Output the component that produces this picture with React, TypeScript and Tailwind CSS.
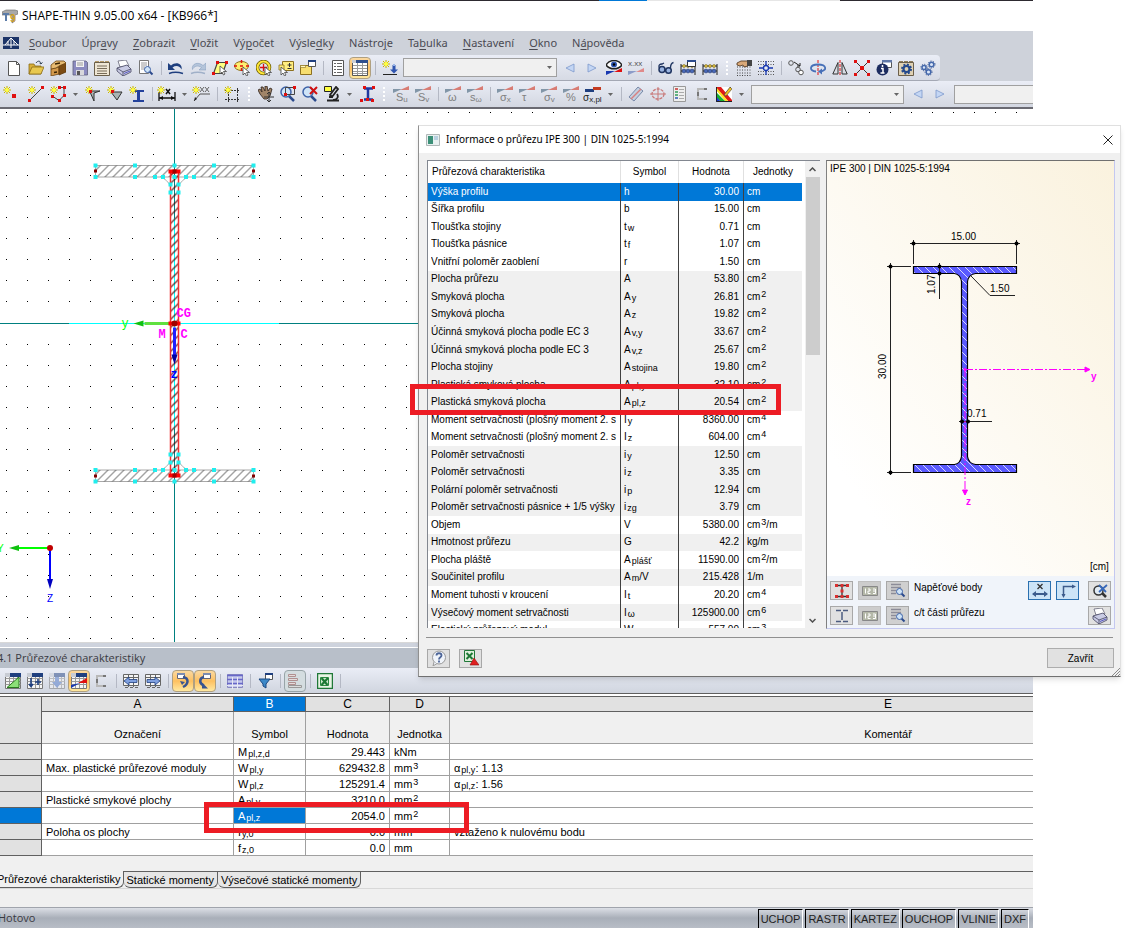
import type { ReactNode } from 'react';

const SANS = "font-['Liberation_Sans',Arial,sans-serif]";
const UI = "font-['Noto_Sans','Open_Sans',sans-serif]";

/* ---------- icons ---------- */

function Svg({ children, wide }: { children: ReactNode; wide?: boolean }) {
  return (
    <svg viewBox={wide ? '0 0 20 16' : '0 0 16 16'} className={wide ? 'h-4 w-5 overflow-visible' : 'h-4 w-4'} fill="none" aria-hidden="true">
      {children}
    </svg>
  );
}

function Star() {
  return (
    <g stroke="#c8b400" strokeWidth="1">
      <path d="M4 0v8M0 4h8M1 1l6 6M7 1l-6 6" />
      <circle cx="4" cy="4" r="2" fill="#ffff40" stroke="none" />
    </g>
  );
}

function Cursor({ x = 8, y = 7 }: { x?: number; y?: number }) {
  return <path transform={`translate(${x} ${y})`} d="M0 0v8l2-2 1.500 3 1.500-1-1.500-2.500h3z" fill="#fff" stroke="#444" strokeWidth=".8" />;
}

function Lens({ x = 7, y = 6 }: { x?: number; y?: number }) {
  return (
    <g transform={`translate(${x} ${y})`}>
      <path d="M5.500 5.500l3 3" stroke="#2b4a8c" strokeWidth="2" />
      <circle cx="3.500" cy="3.500" r="3" fill="#cfe4f7" stroke="#3d62a8" />
    </g>
  );
}

// stress / distribution buttons: coloured wedge above a symbol
function Wedge({ label, sub, strong }: { label: string; sub?: string; strong?: boolean }) {
  return (
    <Svg wide>
      {strong ? (
        <path d="M2 3h9v3H2z" fill="#1f3f7f" />
      ) : (
        <path d="M2 3h9L2 7z" fill="#8296a8" />
      )}
      {strong ? <path d="M10 1h8v3h-8z" fill="#c33a20" /> : <path d="M9 4l9-4v4z" fill="#d87c74" />}
      <text x={strong ? 0 : 5} y="15" fontSize={strong ? 10 : 11} fill={strong ? '#222' : '#808080'} fontFamily="Liberation Sans, sans-serif">
        {label}
        {sub && (
          <tspan fontSize="8" dy="1">
            {sub}
          </tspan>
        )}
      </text>
    </Svg>
  );
}

function Abacus({ top }: { top?: boolean }) {
  return (
    <Svg>
      <path d="M1 15V4M15 15V4M1 6h14M1 11h14" stroke="#222" />
      <g fill="#e0c040" stroke="#6b5a10" strokeWidth=".5">
        <circle cx="4" cy="6" r="1.500" />
        <circle cx="8" cy="6" r="1.500" />
        <circle cx="12" cy="6" r="1.500" />
      </g>
      <g fill="#4868b8" stroke="#203060" strokeWidth=".5">
        <circle cx="4" cy="11" r="2" />
        <circle cx="8" cy="11" r="2" />
        <circle cx="12" cy="11" r="2" />
      </g>
      {top && <path d="M7.500 .5h8v6h-8z" fill="#fff" stroke="#333" />}
      {top && <path d="M7 0h9v2H7z" fill="#2b4a8c" />}
    </Svg>
  );
}

function Sheet({ children, faded }: { children?: ReactNode; faded?: boolean }) {
  return (
    <Svg>
      <g opacity={faded ? 0.5 : 1}>
        <path d="M.5 1.500h15v14H.5z" fill="#f6f6f6" stroke="#777" />
        <path d="M.5 5.500h15M.5 8.500h15M.5 11.500h15M4.500 2v13M8.500 2v13M12.500 2v13" stroke="#999" />
        <path d="M5 0h11v4H5z" fill="#1f3f7f" />
        <path d="M0 0h5v4H0z" fill="#c8ccd4" />
        {children}
      </g>
    </Svg>
  );
}

function Printer() {
  return (
    <Svg>
      <path d="M4 7L2 1l8-1 3 6z" fill="#fff" stroke="#667" strokeWidth=".8" />
      <path d="M1 8l10-3 4 4v3l-8 4-6-5z" fill="#c9cbe4" stroke="#44445f" strokeWidth=".8" />
      <path d="M1 8l6 4 8-3M7 12v4" stroke="#44445f" strokeWidth=".8" />
      <path d="M8 13.500l6-2.500" stroke="#5a5ac0" />
    </Svg>
  );
}

const icons: Record<string, ReactNode> = {
  novy: (
    <Svg>
      <path d="M2.500 1.500h8l3 3v11h-11z" fill="#fff" stroke="#555" />
      <path d="M10.500 1.500v3h3" stroke="#555" />
    </Svg>
  ),
  otevrit: (
    <Svg>
      <path d="M1 14V4h5l1 2h6v8z" fill="#d8ae38" stroke="#8c6c18" strokeWidth=".8" />
      <path d="M1 14l3-7h12l-3 7z" fill="#e8c850" stroke="#8c6c18" strokeWidth=".8" />
      <path d="M8 3c2-3 5-2 5 1l1.500-1.500M13 4l-1.500-1" stroke="#345" />
    </Svg>
  ),
  spravce: (
    <Svg>
      <path d="M1 9l8-2v7l-8 2z" fill="#d49a4c" stroke="#6b4210" strokeWidth=".8" />
      <path d="M9 5l7-2v9l-7 3z" fill="#7c4c14" stroke="#5a3608" strokeWidth=".8" />
      <path d="M1 9V5l5-4h8l2 2-7 3-3 2z" fill="#e8bb72" stroke="#6b4210" strokeWidth=".8" />
      <path d="M4 12.500l3-.5M5 4l5-1" stroke="#3a2404" strokeWidth="1.500" />
    </Svg>
  ),
  ulozit: (
    <Svg>
      <path d="M1 1h13l1.500 1.500V15H1z" fill="#8c8cc0" stroke="#60607c" strokeWidth=".8" />
      <path d="M4 1h8v6H4z" fill="#f4f4f4" />
      <path d="M5 3h6M5 5h6" stroke="#999" />
      <path d="M4 10h8v5H4z" fill="#d8d8dc" />
      <path d="M5 11h3v4H5z" fill="#555" />
    </Svg>
  ),
  protokol: (
    <Svg>
      <path d="M1 1h4v2H1zM6 1h4v2H6zM11 1h4v2h-4z" fill="#b59a6a" />
      <path d="M.5 2.500h15v13H.5z" fill="#efe6d4" stroke="#6b5f4a" />
      <path d="M3 6h10M3 8.500h10M3 11h10M3 13.500h10" stroke="#776b58" />
    </Svg>
  ),
  tisk: <Printer />,
  nahled: (
    <Svg>
      <path d="M1.500.5h9v13h-9z" fill="#fff" stroke="#777" />
      <path d="M3 3h6M3 5h6M3 7h4M3 9h4" stroke="#999" />
      <Lens x={6} y={6} />
    </Svg>
  ),
  zpet: (
    <Svg>
      <path d="M0 3v7h7L4.500 7.500C8 5 12 6 13.500 9.500 15 4 8 1 3 5.500z" fill="#1f3f7f" />
      <path d="M1 13.500c4-1.500 9-1.500 14 0" stroke="#1f3f7f" strokeWidth="1.500" />
    </Svg>
  ),
  znovu: (
    <Svg>
      <path d="M16 3v7H9l2.500-2.500C8 5 4 6 2.500 9.500 1 4 8 1 13 5.500z" fill="#b4c4da" stroke="#8098bb" strokeWidth=".5" />
      <path d="M1 13.500c4-1.500 9-1.500 14 0" stroke="#a0b0c8" strokeWidth="1.500" />
    </Svg>
  ),
  rovnobeznik: (
    <Svg>
      <path d="M5.500 2.500h9l-4 11h-9z" fill="#ffff80" stroke="#444" strokeWidth="1.200" />
      <path d="M4 1h3v3H4zM13 1h3v3h-3zM0 12h3v3H0z" fill="#e01010" />
      <Cursor x={8} y={6} />
    </Svg>
  ),
  elipsa: (
    <Svg>
      <ellipse cx="7.500" cy="6" rx="7" ry="4.500" fill="#ffee70" stroke="#8c7020" />
      <path d="M7.500 0v3M7.500 8v3M0 6h3M6 6h3M12 6h3" stroke="#e01010" strokeWidth="1.500" />
      <Cursor x={9} y={7} />
    </Svg>
  ),
  kruh: (
    <Svg>
      <circle cx="7.500" cy="7.500" r="6" stroke="#6b5a00" strokeWidth="3.500" />
      <circle cx="7.500" cy="7.500" r="6" stroke="#ffe838" strokeWidth="2" />
      <path d="M7.500 4v7M4 7.500h7" stroke="#e01010" strokeWidth="1.300" />
      <Cursor x={9} y={7} />
    </Svg>
  ),
  pridat: (
    <Svg>
      <path d="M4.500 1.500h11v9h-11z" fill="#ffee80" stroke="#8c7020" />
      <path d="M11.500 3v4M9.500 5h4M9.500 8.500h4" stroke="#333" />
      <path d="M1 5h5v5H1z" fill="#ffee80" stroke="#8c7020" strokeWidth=".8" />
      <Cursor x={3} y={7} />
    </Svg>
  ),
  okna: (
    <Svg>
      <path d="M.5 5.500h11v9H.5z" fill="#f7de70" stroke="#8c7020" />
      <path d="M.5 5.500h5v2h-5z" fill="#fff8c0" stroke="#8c7020" strokeWidth=".6" />
      <path d="M8.500.5h7v6h-7z" fill="#fff" stroke="#555" />
      <path d="M8 0h8v2H8z" fill="#1f3f7f" />
    </Svg>
  ),
  seznam: (
    <Svg>
      <path d="M2.500.5h11v15h-11z" fill="#fff" stroke="#555" />
      <path d="M4 3.500h2M4 6.500h2M4 9.500h2M4 12.500h2M7 3.500h5M7 6.500h5M7 9.500h5M7 12.500h5" stroke="#666" />
    </Svg>
  ),
  tabulka: (
    <Svg>
      <path d="M.5.5h15v15H.5z" fill="#fff" stroke="#555" />
      <path d="M4 0h12v3H4z" fill="#2f4f8f" />
      <path d="M0 0h4v3H0z" fill="#c8ccd4" />
      <path d="M1 5.500h14M1 8.500h14M1 11.500h14M1 13.500h14M5.500 3v12M10.500 3v12" stroke="#999" />
    </Svg>
  ),
  zatizeni: (
    <Svg>
      <Star />
      <path d="M12 5v6" stroke="#2f55b0" strokeWidth="3" />
      <path d="M8 9.500l4 4 4-4z" fill="#2f55b0" />
      <path d="M1 14.500h14" stroke="#222" />
      <path d="M11 5h2" stroke="#99b4e8" strokeWidth="2" />
    </Svg>
  ),
  vlevo: (
    <Svg>
      <path d="M12 4v8L4 8z" fill="#c4d6f4" stroke="#7c98cc" strokeWidth=".8" />
    </Svg>
  ),
  vpravo: (
    <Svg>
      <path d="M4 4v8l8-4z" fill="#c4d6f4" stroke="#7c98cc" strokeWidth=".8" />
    </Svg>
  ),
  oko: (
    <Svg>
      <path d="M0 5c4-6 12-6 16 0-4 5-12 5-16 0z" fill="#fff" stroke="#222" strokeWidth="1.500" />
      <circle cx="8" cy="4.500" r="3" fill="#2f55b0" />
      <circle cx="8" cy="4.500" r="1.300" fill="#000" />
      <path d="M0 11h9l-9 4z" fill="#1838b0" />
      <path d="M8 12l8-4v4z" fill="#e01010" />
    </Svg>
  ),
  hodnoty: (
    <Svg>
      <text x="0" y="6" fontSize="8" fill="#555" fontFamily="Liberation Sans, sans-serif">
        x.xx
      </text>
      <path d="M0 11h9l-9 4z" fill="#8c9cc8" />
      <path d="M8 12l8-4v4z" fill="#e08a8a" />
    </Svg>
  ),
  bryle: (
    <Svg>
      <circle cx="4" cy="9.500" r="3" fill="#9ab4e0" stroke="#1f3460" strokeWidth="1.500" />
      <circle cx="10.500" cy="10.500" r="2.800" fill="#9ab4e0" stroke="#1f3460" strokeWidth="1.500" />
      <path d="M1.500 8C0 5 2 4 4 4l2-1M12.500 8c0-3 1-5 3-5.500M6.500 9l1.500 1" stroke="#1f3460" strokeWidth="1.300" />
    </Svg>
  ),
  vypocetOkno: <Abacus top />,
  vypocet: <Abacus />,
  rastrRuka: (
    <Svg>
      <path d="M1 7h15M1 10h15M1 13h15M1 15.500h15" stroke="#444" strokeDasharray="1 1.500" />
      <path d="M1 3l4-2h7v5l-4 1-1-2-3 1-3-1z" fill="#d9a878" stroke="#4a3018" strokeWidth=".8" />
      <path d="M11 0h5v6h-5z" fill="#444" />
    </Svg>
  ),
  rastr: (
    <Svg>
      <path d="M0 1.500h16M0 4.500h16M0 11.500h16M0 14.500h16" stroke="#555" strokeDasharray="1 1.500" />
      <path d="M8 1v14M1 8h14" stroke="#1838b0" strokeWidth="1.300" />
      <circle cx="8" cy="8" r="2.500" fill="#e6eaf2" stroke="#1838b0" strokeWidth="1.300" />
    </Svg>
  ),
  posun: (
    <Svg>
      <circle cx="3" cy="3" r="2.300" stroke="#555" />
      <circle cx="10" cy="9.500" r="2.300" stroke="#555" />
      <circle cx="13" cy="12.500" r="2.300" fill="#fff" stroke="#555" />
      <path d="M6 2l6 4M12 6V3M12 6H9" stroke="#222" />
    </Svg>
  ),
  otoceni: (
    <Svg>
      <path d="M8 0v16" stroke="#e01010" strokeDasharray="3 1" />
      <path d="M6 11.500C-1 11-1 4.500 8 4.500s9 6 3 7" stroke="#4870b8" strokeWidth="1.800" />
      <path d="M12 8.500v6l-4-3z" fill="#4870b8" />
    </Svg>
  ),
  zrcadlo: (
    <Svg>
      <path d="M6 2.500V14H.8zM10 2.500V14h5.200z" fill="#d8dce4" stroke="#333" />
      <path d="M8 0v16" stroke="#e01010" strokeDasharray="3 1" />
    </Svg>
  ),
  pruseciky: (
    <Svg>
      <path d="M1 1l14 14M15 1L1 15" stroke="#333" />
      <path d="M0 0h3v3H0zM13 0h3v3h-3zM0 13h3v3H0zM13 13h3v3h-3zM6 6h4v4H6z" fill="#e01010" />
    </Svg>
  ),
  info: (
    <Svg>
      <path d="M6.500.5h9v7h-9z" fill="#fff" stroke="#555" />
      <path d="M6 0h10v2.500H6z" fill="#6078a8" />
      <circle cx="6.500" cy="9.500" r="6" fill="#1c2c60" />
      <path d="M6.500 5v2M5 8.500h2V13M4.500 13h4" stroke="#fff" strokeWidth="1.500" />
    </Svg>
  ),
  nastaveni: (
    <Svg>
      <path d="M1 1h4v2H1zM6 1h4v2H6zM11 1h4v2h-4z" fill="#8c7c5c" />
      <path d="M.5 2.500h15v13H.5z" fill="#e0d2b4" stroke="#6b5f4a" />
      <circle cx="8.500" cy="9" r="4.500" stroke="#24498c" strokeWidth="2" strokeDasharray="2 1.500" />
      <circle cx="8.500" cy="9" r="3" stroke="#24498c" strokeWidth="2.200" />
    </Svg>
  ),
  ozubena: (
    <Svg>
      <g stroke="#4468ac" fill="#dbe6f7" strokeWidth="1.500">
        <circle cx="4" cy="7.500" r="2" />
        <circle cx="11.500" cy="4.500" r="2.300" />
        <circle cx="8.500" cy="12" r="2.300" />
      </g>
      <g stroke="#2c4c8c" strokeDasharray="1 1.500">
        <circle cx="4" cy="7.500" r="3.200" />
        <circle cx="11.500" cy="4.500" r="3.500" />
        <circle cx="8.500" cy="12" r="3.500" />
      </g>
    </Svg>
  ),
  uzel: (
    <Svg>
      <Star />
      <path d="M9 8h4v4H9z" fill="#e01010" />
    </Svg>
  ),
  linie: (
    <Svg>
      <Star />
      <path d="M2 14L14 2" stroke="#444" />
      <path d="M0 13h3v3H0zM13 0h3v3h-3z" fill="#e01010" />
    </Svg>
  ),
  oblouk: (
    <Svg>
      <Star />
      <path d="M8 1.500h6v8l-5 5-6-4" stroke="#444" />
      <path d="M8 0h3v3H8zM13 0h3v3h-3zM13 8h3v3h-3zM8 13h3v3H8zM1 9h3v3H1z" fill="#e01010" />
    </Svg>
  ),
  prvekA: (
    <Svg>
      <path d="M3 5h12l-6 2v8L5 6z" fill="#aab4b4" stroke="#333" />
      <Star />
      <path d="M4 4h3v3H4z" fill="#e01010" />
    </Svg>
  ),
  prvekB: (
    <Svg>
      <path d="M4 6h11l-5 8z" fill="#aab4b4" stroke="#333" />
      <Star />
      <path d="M4 4h3v3H4z" fill="#e01010" />
    </Svg>
  ),
  profil: (
    <Svg>
      <path d="M4 4h11v2h-4v8h4v2H4v-2h4V6H4z" fill="#24429c" />
      <Star />
    </Svg>
  ),
  kota: (
    <Svg wide>
      <path d="M2 6v9M18 6v9M2 12h16" stroke="#111" strokeWidth="1.300" />
      <path d="M2 12l4-2v4zM18 12l-4-2v4z" fill="#111" />
      <path d="M9 3l4 5M13 3L9 8" stroke="#111" strokeWidth="1.500" />
      <Star />
    </Svg>
  ),
  poznamka: (
    <Svg wide>
      <path d="M2 15l6-7h10" stroke="#555" />
      <path d="M2 15l1-4 2 2z" fill="#222" />
      <path d="M8 1l4 5M12 1L8 6M13 1l4 5M17 1l-4 5" stroke="#666" />
      <Star />
    </Svg>
  ),
  pomocna: (
    <Svg>
      <path d="M4.500 2v14M13.500 2v14M1 4.500h15M1 13.500h15" stroke="#333" strokeDasharray="2 1" />
      <Star />
    </Svg>
  ),
  posouvat: (
    <Svg>
      <path d="M2 8L0 4l2-1 2 3-1-5h2l2 4V0h2l1 5 2-3 2 1-2 7-3 3H6z" fill="#a08468" stroke="#2c2018" strokeWidth=".8" />
      <path d="M11 6v10M6 11h10M9 8l2-2 2 2M9 14l2 2 2-2" stroke="#333" />
    </Svg>
  ),
  zoomOkno: (
    <Svg>
      <path d="M9 10l5 5" stroke="#2b4a8c" strokeWidth="2.500" />
      <circle cx="6" cy="6" r="5" fill="#cfe4f7" stroke="#3d62a8" strokeWidth="1.500" />
      <path d="M5.500 1.500h9v7h-9z" stroke="#444" />
      <path d="M13 0h3v3h-3zM4 7h3v3H4z" fill="#e01010" />
    </Svg>
  ),
  zoomZrusit: (
    <Svg>
      <path d="M9 10l5 5" stroke="#2b4a8c" strokeWidth="2.500" />
      <circle cx="6" cy="6" r="5" fill="#cfe4f7" stroke="#3d62a8" strokeWidth="1.500" />
      <path d="M8 1l7 7M15 1L8 8" stroke="#d01010" strokeWidth="2" />
    </Svg>
  ),
  pohled: (
    <Svg>
      <path d="M12 1l2 2-6 8-2-2zM3 14.500h12M9 14c4 0 6-3 4-6M5 11h4" stroke="#222" strokeWidth="1.800" />
      <path d="M.5.500h7v5h-7z" fill="#ffff40" stroke="#222" />
    </Svg>
  ),
  prurez: (
    <Svg>
      <path d="M5 2.500h9M5 13.500h9M9 2v12" stroke="#2038a0" strokeWidth="2.500" />
      <path d="M4 0h3v3H4zM13 0h3v3h-3zM1 13h3v3H1zM12 13h3v3h-3zM7 12h3v3H7z" fill="#e01010" />
    </Svg>
  ),
  su: <Wedge label="S" sub="u" />,
  sv: <Wedge label="S" sub="v" />,
  omega: <Wedge label="ω" />,
  somega: <Wedge label="s" sub="ω" />,
  sigx: <Wedge label="σ" sub="x" />,
  tau: <Wedge label="τ" />,
  sigv: <Wedge label="σ" sub="v" />,
  procento: <Wedge label="%" />,
  sigpl: <Wedge label="σ" sub="x,pl" strong />,
  sikme: (
    <Svg>
      <path d="M1 11L10 1l5 4-9 10z" fill="#c4d0e0" stroke="#7888a8" />
      <path d="M3 13L13 3" stroke="#d88080" strokeWidth="1.500" />
    </Svg>
  ),
  jadro: (
    <Svg>
      <ellipse cx="8" cy="8" rx="6" ry="5" stroke="#c87878" strokeWidth="1.300" strokeDasharray="3 1" />
      <path d="M8 1v14M0 8h16" stroke="#c87878" />
    </Svg>
  ),
  barvy: (
    <Svg>
      <path d="M1.500.5h12v15h-12z" fill="#eee" stroke="#999" />
      <path d="M3 3h3" stroke="#d06060" strokeWidth="2" />
      <path d="M3 6h3M3 9h3" stroke="#60b080" strokeWidth="2" />
      <path d="M3 12h3" stroke="#6080c0" strokeWidth="2" />
      <path d="M7 3.500h5M7 6.500h5M7 9.500h5M7 12.500h5" stroke="#aaa" />
    </Svg>
  ),
  tvarC: (
    <Svg>
      <path d="M12 3H4v10h8" stroke="#b8b8b8" strokeWidth="2" />
      <path d="M13 3h-3M13 13h-3M4 6v4" stroke="#777" strokeWidth="2" />
    </Svg>
  ),
  duha: (
    <Svg>
      <path d="M0 1h16v15H0z" fill="#fff" />
      <path d="M0 1h5l11 13v2h-3L0 2z" fill="#e01818" />
      <path d="M0 4l10 12h3L0 1z" fill="#ffe020" />
      <path d="M0 6v5l5 5h5z" fill="#18b030" />
      <path d="M0 10v6h5z" fill="#1838d0" />
      <path d="M.5 1v14.500H16M9 8l6-7" stroke="#222" />
      <path d="M8 9l6-8 2 2-6 7z" fill="#f0c020" stroke="#444" strokeWidth=".6" />
    </Svg>
  ),
  tUpravit: (
    <Sheet>
      <path d="M2 14.500L14 4v10.500z" fill="#8ce078" stroke="#2a7a20" />
    </Sheet>
  ),
  tVlozit: (
    <Sheet>
      <path d="M4 5v8M2 11l2 2.500L6 11M11 6v6M8 9h6" stroke="#1f3f7f" strokeWidth="1.600" />
    </Sheet>
  ),
  tDolu: (
    <Sheet faded>
      <path d="M6 4h4v5h3l-5 6-5-6h3z" fill="#5078c8" />
    </Sheet>
  ),
  tGraf: (
    <Sheet>
      <path d="M0 15v-3l9-2z" fill="#1838b0" />
      <path d="M7 10l9-5v5z" fill="#e01010" />
    </Sheet>
  ),
  tZpet: (
    <Svg>
      <path d="M.5 1.500h15v11H.5z" fill="#f4f4f4" stroke="#666" />
      <path d="M1 4.500h14M5.500 2v12M10.500 2v12M2 14.500h3M7 14.500h3M12 14.500h3" stroke="#666" />
      <path d="M1 8l5-4v2.500h8v3H6V12z" fill="#7fa0e0" stroke="#1f3f7f" strokeWidth=".8" />
    </Svg>
  ),
  tVpred: (
    <Svg>
      <path d="M.5 1.500h15v11H.5z" fill="#f4f4f4" stroke="#666" />
      <path d="M1 4.500h14M5.500 2v12M10.500 2v12M2 14.500h3M7 14.500h3M12 14.500h3" stroke="#666" />
      <path d="M15 8l-5-4v2.500H2v3h8V12z" fill="#7fa0e0" stroke="#1f3f7f" strokeWidth=".8" />
    </Svg>
  ),
  tSync: (
    <Svg>
      <path d="M2.500.5h7v5h-7z" fill="#fff" stroke="#667" />
      <path d="M2 0h8v2H2z" fill="#7c8cb0" />
      <path d="M8 4c6 1 6 7 0 10" stroke="#3a5590" strokeWidth="2.500" />
      <path d="M5 8l5 1-3 3z" fill="#3a5590" />
    </Svg>
  ),
  tSync2: (
    <Svg>
      <path d="M6.500.5h7v5h-7z" fill="#fff" stroke="#667" />
      <path d="M6 0h8v2H6z" fill="#7c8cb0" />
      <path d="M7 4C2 5 2 11 7 12.500" stroke="#3a5590" strokeWidth="2.500" />
      <path d="M5 9.500v6h6z" fill="#3a5590" />
    </Svg>
  ),
  tRadky: (
    <Svg>
      <path d="M.5 1.500h15v13H.5z" fill="#c4c8ec" stroke="#8888c0" />
      <path d="M0 2.500h16M0 6.500h16M0 10.500h16" stroke="#6868c8" strokeWidth="1.500" />
      <path d="M0 12.500h16M5.500 4v12M10.500 4v12" stroke="#e8e8f4" />
    </Svg>
  ),
  tFiltr: (
    <Svg>
      <path d="M8.500.5h7v6h-7z" fill="#fff" stroke="#555" />
      <path d="M8 0h8v2H8z" fill="#1f3f7f" />
      <path d="M2 6h11L9 11v4l-3-2v-2z" fill="#3c88c8" stroke="#1c4880" />
    </Svg>
  ),
  tPruhy: (
    <Svg>
      <path d="M1.500 1.500h7v2h-7zM1.500 5.500h9v2h-9zM1.500 9.500h7v2h-7z" fill="#e4dcdc" stroke="#b09090" />
      <path d="M1.500 12.500h13v2h-13z" fill="#dcdcdc" stroke="#999" />
    </Svg>
  ),
  excel: (
    <Svg>
      <path d="M.5.5h15v15H.5z" fill="#e8f4e4" stroke="#207838" strokeWidth="1.500" />
      <path d="M3.500 4.500h8v8h-8z" fill="#cfe8cc" stroke="#2c8c44" />
      <path d="M4.500 5l6 7M11 5l-6.500 7" stroke="#1c7834" strokeWidth="2.200" />
    </Svg>
  ),
};

/* ---------- small parts ---------- */

function ToolButton({ name, label, active }: { name: string; label: string; active?: 'orange' | 'gray' }) {
  const look =
    active === 'orange'
      ? 'rounded-sm border border-[#b0a080] bg-linear-to-b from-[#fbd9a0] via-[#fdc060] to-[#ffe9a0]'
      : active === 'gray'
        ? 'rounded-sm border border-[#98a4a8] bg-[#d4dde0]'
        : '';
  return (
    <button type="button" aria-label={label} className={`flex h-[22px] w-[22px] shrink-0 items-center justify-center ${look}`}>
      {icons[name]}
    </button>
  );
}

const Sep = () => (
  <span className="flex w-2 shrink-0 justify-center">
    <span className="h-[14px] w-px bg-[#b4b8c4]" />
  </span>
);

const Grip = () => (
  <span className="flex w-3 shrink-0 flex-col items-center gap-[2px]">
    <i className="h-[2px] w-[2px] bg-white" />
    <i className="h-[2px] w-[2px] bg-white" />
    <i className="h-[2px] w-[2px] bg-white" />
    <i className="h-[2px] w-[2px] bg-white" />
  </span>
);

const Arrow = ({ label }: { label: string }) => (
  <button type="button" aria-label={label} className="flex w-[13px] shrink-0 justify-center">
    <svg viewBox="0 0 5 3" className="h-[3px] w-[5px]">
      <path d="M0 0h5L2.500 3z" fill="#666" />
    </svg>
  </button>
);

function Combo({ label, className }: { label: string; className: string }) {
  return (
    <span className={`relative h-[19px] shrink-0 ${className}`}>
      <select aria-label={label} className="h-full w-full appearance-none border border-[#a0a0a0] bg-[#f0f0f0]" />
      <svg viewBox="0 0 5 3" className="pointer-events-none absolute top-2 right-[5px] h-[3px] w-[5px]">
        <path d="M0 0h5L2.500 3z" fill="#666" />
      </svg>
    </span>
  );
}

type Tool = string | [string, 'orange' | 'gray'];

// '|' separator, ':' grip, 'v' drop-down arrow
function Tools({ items }: { items: Tool[] }) {
  return (
    <>
      {items.map((t, i) => {
        if (t === '|') return <Sep key={i} />;
        if (t === ':') return <Grip key={i} />;
        if (t === 'v') return <Arrow key={i} label="Další možnosti" />;
        if (typeof t === 'string') return <ToolButton key={i} name={t} label={t} />;
        return <ToolButton key={i} name={t[0]} label={t[0]} active={t[1]} />;
      })}
    </>
  );
}

// "A_pl,y" -> subscript, "cm^2" -> superscript, "~" goes back to the base line
function Rich({ text }: { text: string }) {
  return (
    <>
      {text.split(/(?=[_^~])/).map((part, i) => {
        if (part[0] === '_') return <sub key={i} className="-bottom-px ml-px text-[9px]">{part.slice(1)}</sub>;
        if (part[0] === '^') return <sup key={i} className="-top-[3px] ml-px text-[9px]">{part.slice(1)}</sup>;
        return <span key={i}>{part[0] === '~' ? part.slice(1) : part}</span>;
      })}
    </>
  );
}

/* ---------- main window ---------- */

const menu: [string, string, string][] = [
  ['', 'S', 'oubor'],
  ['Úpr', 'a', 'vy'],
  ['', 'Z', 'obrazit'],
  ['', 'V', 'ložit'],
  ['Vý', 'p', 'očet'],
  ['Výsle', 'd', 'ky'],
  ['Nástro', 'j', 'e'],
  ['Ta', 'b', 'ulka'],
  ['', 'N', 'astavení'],
  ['', 'O', 'kno'],
  ['N', 'á', 'pověda'],
];

function TitleBar() {
  return (
    <>
      <div className="flex h-px bg-[#2d2a30]">
        <div className="ml-[599px] w-12 bg-[#0078d7]" />
        <div className="w-[193px] bg-[#e6e6e6]" />
      </div>
      <div className="flex h-[30px] items-center gap-1 bg-white pl-[2px]">
        <Svg>
          <path d="M0 4l4-2h9l3 1v3l-3 1v6l-3 2V7H0z" fill="#a8a8a8" stroke="#666" strokeWidth=".6" />
          <path d="M1 5h6v2H5v6H3V7H1z" fill="#5c7ca8" />
          <text x="8" y="14" fontSize="10" fontWeight="700" fill="#d0a020" fontFamily="Liberation Sans, sans-serif">
            9
          </text>
        </Svg>
        <h1 className="font-['Open_Sans',sans-serif] text-[12px] text-black">SHAPE-THIN 9.05.00 x64 - [KB966*]</h1>
      </div>
      <nav className="flex h-6 items-center gap-[15px] bg-[#ced2da] pl-[3px] text-[11px] text-[#4a4a52]">
        <svg viewBox="0 0 16 12" className="-mr-[5px] h-3 w-4" aria-hidden="true">
          <path d="M0 0h16v12H0z" fill="#1c3468" />
          <path d="M0 8h16M8 1v10M8 1L2 8M8 1l7 7M5 4v4M11 4v4" stroke="#fff" fill="none" />
        </svg>
        {menu.map(([a, b, c]) => (
          <button type="button" key={a + b + c}>
            {a}
            <span className="underline underline-offset-2">{b}</span>
            {c}
          </button>
        ))}
      </nav>
    </>
  );
}

function Toolbars() {
  return (
    <div className="bg-[#ced2da]">
      <div className="flex h-[26px] w-[940px] items-center rounded-r border-b border-[#a4a8b4] bg-linear-to-b from-[#eaedf6] to-[#d6dae4] pl-[3px]">
        <Tools items={['novy', 'otevrit', 'spravce', 'ulozit', 'protokol', 'tisk', 'nahled', '|']} />
        <Tools items={['zpet', 'znovu', 'rovnobeznik', 'elipsa', 'kruh', 'pridat', 'okna', '|', 'seznam', ['tabulka', 'orange'], '|', 'zatizeni']} />
        <Combo label="Zatěžovací stav" className="mr-[2px] ml-[2px] w-[154px]" />
        <Tools items={['vlevo', 'vpravo', 'oko', 'hodnoty', '|', 'bryle', 'vypocetOkno', 'vypocet', ':', 'rastrRuka', 'rastr', '|']} />
        <Tools items={['posun', 'otoceni', 'zrcadlo', 'pruseciky', 'info', 'nastaveni', 'ozubena']} />
      </div>
      <div className="flex h-7 items-center overflow-hidden border-b-2 border-[#6a6a72] bg-linear-to-b from-[#eaedf6] to-[#d3d7e1]">
        <Tools items={['uzel']} />
        <span className="flex pl-[3px]">
          <Tools items={['linie', 'oblouk']} />
        </span>
        <Tools items={['v', 'prvekA', 'prvekB', 'profil', '|', 'kota', 'v', 'poznamka', '|', 'pomocna', ':', 'posouvat', 'zoomOkno', 'zoomZrusit', 'pohled', 'v', 'prurez', ':']} />
        <Tools items={['su', 'sv', '|', 'omega', 'somega', '|', 'sigx', 'tau', 'sigv', 'procento', 'sigpl', 'v', '|']} />
        <Tools items={['sikme', 'jadro', 'barvy', 'tvarC', 'duha', 'v']} />
        <Combo label="Výsledky" className="mx-[3px] w-[153px]" />
        <Tools items={['vlevo', 'vpravo']} />
        <Combo label="Řez" className="ml-[3px] w-[154px]" />
      </div>
    </div>
  );
}

const dots = () => {
  let d = '';
  for (let row = 0; row < 26; row++) {
    for (let col = 0; col < 60; col++) d += `M${6 + Math.round(col * 21.05)} ${3.5 + Math.round(row * 21.05)}h1`;
  }
  return d;
};

const flangeNodes = [95.5, 135, 174.5, 214, 253.5];

// origin is the centroid of the section
function Section() {
  const nodes: [number, number][] = [];
  for (const x of flangeNodes) {
    nodes.push([x - 174.5, -158], [x - 174.5, 158]);
    if (x !== 174.5) nodes.push([x - 174.5, -146.500], [x - 174.5, 146.500]);
  }
  for (const s of [-1, 1]) {
    for (const x of [-19.500, -11.500, 0, 11.500, 19.500]) nodes.push([x, s * 146.500]);
    for (const y of [139, 131]) nodes.push([-4, s * y], [4, s * y]);
  }
  return (
    <g transform="translate(174.5 214.5)">
      <path d="M-79-158H79v11.500H-79zM-79 146.500H79V158H-79z" fill="#fff" stroke="#a8a8a8" />
      <path d="M-79-158H79v11.500H-79zM-79 146.500H79V158H-79z" fill="url(#hatch)" />
      {[-1, 1].map((s) => (
        <path key={s} transform={`scale(1 ${s})`} d="M-14-146.500Q-7-144-4-137M14-146.500Q7-144 4-137" fill="none" stroke="#b0b0b0" />
      ))}
      <path d="M0-158V158" stroke="#008080" />
      <path d="M0-105V105" stroke="#00ffff" />
      <path d="M-4-152H4V152H-4z" fill="url(#hatchWeb)" stroke="#f03030" strokeWidth="1.500" />
      {nodes.map(([x, y], i) => (
        <rect key={i} x={x - 2} y={y - 2} width="4" height="4" fill="#20eeee" />
      ))}
      <path d="M-80.500-154h3v3h-3zM77.500-154h3v3h-3zM-80.500 151h3v3h-3zM77.500 151h3v3h-3z" fill="#800000" />
      <path d="M-6-154H6v4H-6zM-6 150H6v4H-6z" fill="#ff0000" />
      <path d="M-2-154H2v4H-2zM-2 150H2v4H-2z" fill="#a00000" />
      <path d="M-30 0H-4" stroke="#60e040" strokeWidth="3" />
      <path d="M-41 0l10-3v6z" fill="#10c010" />
      <path d="M0 4v28" stroke="#2020ff" strokeWidth="3" />
      <path d="M-3 31h6L0 41z" fill="#0000a0" />
      <path d="M-6-2H6v4H-6z" fill="#ff0000" />
      <circle r="3" fill="#a00000" />
      <g fontFamily="Liberation Mono, monospace" fontSize="12" fontWeight="700">
        <text x="2" y="-7" fill="#ff00ff">CG</text>
        <text x="-16" y="14" fill="#ff00ff">M</text>
        <text x="6" y="14" fill="#ff00ff">C</text>
        <text x="-53" y="3" fill="#00ff00" fontWeight="400">y</text>
        <text x="-4" y="54" fill="#0000ff">z</text>
      </g>
    </g>
  );
}

function Canvas() {
  return (
    <div className="min-h-[320px] flex-1 basis-0 overflow-hidden bg-white">
      <svg className="block h-[640px] w-full">
        <defs>
          <pattern id="hatch" width="8" height="8" patternUnits="userSpaceOnUse">
            <path d="M-1 9L9-1M-1 1L1-1M7 9L9 7" stroke="#333" strokeWidth=".9" />
          </pattern>
          <pattern id="hatchWeb" width="8" height="8" patternUnits="userSpaceOnUse">
            <path d="M-1 9L9-1M-1 1L1-1M7 9L9 7" stroke="#500000" strokeWidth="1.200" />
          </pattern>
        </defs>
        <path d={dots()} stroke="#000" shapeRendering="crispEdges" />
        <path d="M0 214.500h1400M174.500 0v640" stroke="#008080" />
        <path d="M69 214.500h210" stroke="#00ffff" />
        <Section />
        <g transform="translate(50 439)">
          <path d="M-32 0H0" stroke="#00ff00" strokeWidth="2" />
          <path d="M-41 0l10-3v6z" fill="#10c010" />
          <path d="M0 0v32" stroke="#0000ff" strokeWidth="2" />
          <path d="M-3 31h6L0 41z" fill="#0000c0" />
          <circle r="3" fill="#c00000" />
          <g fontFamily="Liberation Sans, sans-serif" fontSize="10">
            <text x="-53" y="4" fill="#00ff00">Y</text>
            <text x="-3" y="54" fill="#0000ff">Z</text>
          </g>
        </g>
      </svg>
    </div>
  );
}

/* ---------- lower table ---------- */

const gridRows = [
  ['', 'M_pl,z,d', '29.443', 'kNm', ''],
  ['Max. plastické průřezové moduly', 'W_pl,y', '629432.8', 'mm^3', 'α_pl,y~: 1.13'],
  ['', 'W_pl,z', '125291.4', 'mm^3', 'α_pl,z~: 1.56'],
  ['Plastické smykové plochy', 'A_pl,y', '3210.0', 'mm^2', ''],
  ['', 'A_pl,z', '2054.0', 'mm^2', ''],
  ['Poloha os plochy', 'f_y,0', '0.0', 'mm', 'vztaženo k nulovému bodu'],
  ['', 'f_z,0', '0.0', 'mm', ''],
];

function Grid() {
  const sel = 4;
  return (
    <div className={`relative ${SANS}`}>
      <div className="overflow-hidden border-t border-[#606060] bg-[#f0f0f0] text-[11px] leading-[14px] text-black">
        <table className="w-[1327px] table-fixed border-separate border-spacing-0">
          <colgroup>
            <col className="w-[42px]" />
            <col className="w-[192px]" />
            <col className="w-[72px]" />
            <col className="w-[84px]" />
            <col className="w-[60px]" />
            <col className="w-[877px]" />
          </colgroup>
          <thead>
            <tr className="h-[15px] text-[12px]">
              <th rowSpan={2} className="border-r border-b border-[#606060] bg-[#e1e1e1]" />
              {['A', 'B', 'C', 'D', 'E'].map((c) => (
                <th key={c} className={`border-r border-b border-[#606060] p-0 font-normal ${c === 'B' ? 'bg-[#0078d7] text-white' : 'bg-[#e1e1e1]'}`}>
                  {c}
                </th>
              ))}
            </tr>
            <tr className="h-8">
              {['Označení', 'Symbol', 'Hodnota', 'Jednotka', 'Komentář'].map((c) => (
                <th key={c} className="border-r border-b border-[#a0a0a0] p-0 pb-[2px] align-bottom font-normal">
                  {c}
                </th>
              ))}
            </tr>
          </thead>
          <tbody>
            {gridRows.map((r, i) => (
              <tr key={i} className="h-4 bg-white">
                <th className={`border-r border-b border-[#606060] p-0 ${i === sel ? 'bg-[#0078d7]' : 'bg-[#e1e1e1]'}`} />
                {r.map((cell, j) => (
                  <td
                    key={j}
                    className={`border-r border-b border-[#a0a0a0] px-1 py-0 whitespace-nowrap ${j === 2 ? 'text-right' : ''} ${i === sel && j === 1 ? 'bg-[#0078d7] text-white' : ''}`}
                  >
                    <Rich text={cell} />
                  </td>
                ))}
              </tr>
            ))}
          </tbody>
        </table>
      </div>
      <div className="absolute top-[106px] left-[204px] h-[31px] w-[265px] border-[5px] border-[#ed1c24]" />
    </div>
  );
}

function BottomPanel() {
  return (
    <section>
      <div className="h-[6px] border-t border-b border-t-[#d8d8d8] border-b-white bg-[#ced3dd]" />
      <h2 className="-ml-[3px] h-5 bg-[#b8bfc9] font-['Open_Sans',sans-serif] text-[11px] leading-5 text-[#3a3a42]">4.1 Průřezové charakteristiky</h2>
      <div className="flex h-[26px] items-center border-b border-[#606060] bg-linear-to-b from-[#eaedf6] to-[#d0d5df] pl-[2px]">
        <Tools items={['tUpravit', 'tVlozit', 'tDolu', ['tGraf', 'orange'], 'tvarC', '|', 'tZpet', 'tVpred', '|', ['tSync', 'orange'], ['tSync2', 'orange'], '|']} />
        <Tools items={['tRadky', '|', 'tFiltr', '|', ['tPruhy', 'gray'], '|', 'excel', '|']} />
      </div>
      <div className="h-[2px] bg-white" />
      <Grid />
      <div className="h-[15px] bg-[#f0f0f0]" />
      <div role="tablist" className={`flex h-[18px] border-b border-[#d8d8d8] bg-[#f0f0f0] text-[11px] text-black ${SANS}`}>
        <button type="button" role="tab" aria-selected="true" className="-ml-[3px] h-[17px] rounded-br-md border-r border-b border-[#606060] pr-[2px]">
          Průřezové charakteristiky
        </button>
        <div className="flex flex-1 border-t border-[#606060]">
          {['Statické momenty', 'Výsečové statické momenty'].map((t) => (
            <button key={t} type="button" role="tab" aria-selected="false" className="h-4 rounded-b-md border-r border-b border-[#606060] bg-[#e6e6e6] px-[3px]">
              {t}
            </button>
          ))}
        </div>
      </div>
      <div className="h-[18px] bg-[#f0f0f0]" />
      <footer className="flex h-[21px] items-stretch gap-[2px] border-t border-[#a0a4ac] bg-linear-to-b from-[#dcdfe6] via-[#a9afb9] to-[#b8bdc6] pr-1 text-[11px] text-[#222]">
        <span className="-ml-[2px] flex-1 font-['Open_Sans',sans-serif] leading-5 text-[#3a3a42]">Hotovo</span>
        {['UCHOP', 'RASTR', 'KARTEZ', 'OUCHOP', 'VLINIE', 'DXF'].map((s) => (
          <span key={s} className={`mt-px border-t border-r border-l border-t-black border-r-white border-l-black px-[2px] leading-[18px] ${SANS}`}>
            {s}
          </span>
        ))}
      </footer>
    </section>
  );
}

/* ---------- section info dialog ---------- */

// name, symbol, value, unit, shaded
const props: [string, string, string, string, number][] = [
  ['Výška profilu', 'h', '30.00', 'cm', 0],
  ['Šířka profilu', 'b', '15.00', 'cm', 0],
  ['Tloušťka stojiny', 't_w', '0.71', 'cm', 0],
  ['Tloušťka pásnice', 't_f', '1.07', 'cm', 0],
  ['Vnitřní poloměr zaoblení', 'r', '1.50', 'cm', 0],
  ['Plocha průřezu', 'A', '53.80', 'cm^2', 1],
  ['Smyková plocha', 'A_y', '26.81', 'cm^2', 1],
  ['Smyková plocha', 'A_z', '19.82', 'cm^2', 1],
  ['Účinná smyková plocha podle EC 3', 'A_v,y', '33.67', 'cm^2', 1],
  ['Účinná smyková plocha podle EC 3', 'A_v,z', '25.67', 'cm^2', 1],
  ['Plocha stojiny', 'A_stojina', '19.80', 'cm^2', 1],
  ['Plastická smyková plocha', 'A_pl,y', '32.10', 'cm^2', 1],
  ['Plastická smyková plocha', 'A_pl,z', '20.54', 'cm^2', 1],
  ['Moment setrvačnosti (plošný moment 2. stupně)', 'I_y', '8360.00', 'cm^4', 0],
  ['Moment setrvačnosti (plošný moment 2. stupně)', 'I_z', '604.00', 'cm^4', 0],
  ['Poloměr setrvačnosti', 'i_y', '12.50', 'cm', 1],
  ['Poloměr setrvačnosti', 'i_z', '3.35', 'cm', 1],
  ['Polární poloměr setrvačnosti', 'i_p', '12.94', 'cm', 1],
  ['Poloměr setrvačnosti pásnice + 1/5 výšky', 'i_zg', '3.79', 'cm', 1],
  ['Objem', 'V', '5380.00', 'cm^3~/m', 0],
  ['Hmotnost průřezu', 'G', '42.2', 'kg/m', 1],
  ['Plocha pláště', 'A_plášť', '11590.00', 'cm^2~/m', 0],
  ['Součinitel profilu', 'A_m~/V', '215.428', '1/m', 1],
  ['Moment tuhosti v kroucení', 'I_t', '20.20', 'cm^4', 0],
  ['Výsečový moment setrvačnosti', 'I_ω', '125900.00', 'cm^6', 1],
  ['Elastický průřezový modul', 'W', '557.00', 'cm^3', 0],
];

function PropTable() {
  return (
    <div className="flex h-[468px] w-[393px] overflow-hidden border-t border-l border-[#828790] bg-white">
      <table className={`h-[478px] w-[374px] table-fixed border-separate border-spacing-0 text-[10px] leading-[14px] text-black ${SANS}`}>
        <colgroup>
          <col className="w-[193px]" />
          <col className="w-[58px]" />
          <col className="w-[65px]" />
          <col className="w-[58px]" />
        </colgroup>
        <thead>
          <tr className="h-[22px]">
            <th className="border-r border-[#e0e0e0] p-0 pl-1 text-left font-normal">Průřezová charakteristika</th>
            <th className="border-r border-[#e0e0e0] p-0 font-normal">Symbol</th>
            <th className="border-r border-[#e0e0e0] p-0 font-normal">Hodnota</th>
            <th className="p-0 font-normal">Jednotky</th>
          </tr>
        </thead>
        <tbody>
          {props.map(([name, sym, val, unit, shaded], i) => (
            <tr key={i} className={i === 0 ? 'bg-[#0078d7] text-white' : shaded ? 'bg-[#f0f0f0]' : 'bg-white'}>
              <td className="border-r border-[#404040] py-0 pr-1 pl-[3px]">
                <div className="overflow-hidden whitespace-nowrap">{name}</div>
              </td>
              <td className="border-r border-[#404040] px-[3px] py-0 whitespace-nowrap"><Rich text={sym} /></td>
              <td className="border-r border-[#404040] px-1 py-0 text-right">{val}</td>
              <td className="px-[3px] py-0 whitespace-nowrap"><Rich text={unit} /></td>
            </tr>
          ))}
        </tbody>
      </table>
      <div className="ml-[3px] flex w-[15px] flex-col items-center bg-[#f0f0f0]">
        <button type="button" aria-label="Nahoru" className="flex h-4 items-center">
          <svg viewBox="0 0 7 5" className="h-[5px] w-[7px]"><path d="M.5 4L3.500 1l3 3" fill="none" stroke="#505050" strokeWidth="1.500" /></svg>
        </button>
        <div className="h-[178px] w-[14px] bg-[#cdcdcd]" />
        <button type="button" aria-label="Dolů" className="mt-auto flex h-4 items-center">
          <svg viewBox="0 0 7 5" className="h-[5px] w-[7px]"><path d="M.5 1l3 3 3-3" fill="none" stroke="#505050" strokeWidth="1.500" /></svg>
        </button>
      </div>
    </div>
  );
}

function Preview() {
  return (
    <svg viewBox="0 0 287 415" className="block h-[415px] w-full" fontFamily="Liberation Sans, Arial, sans-serif" fontSize="10">
      <defs>
        <linearGradient id="paper" x1="0" y1="1" x2="1" y2="0">
          <stop offset=".15" stopColor="#fff" />
          <stop offset="1" stopColor="#faf2de" />
        </linearGradient>
        <pattern id="steel" width="8" height="8" patternUnits="userSpaceOnUse">
          <rect width="8" height="8" fill="#5a5aff" />
          <path d="M-1-1l10 10" stroke="#d8d8ff" />
        </pattern>
      </defs>
      <rect width="287" height="415" fill="url(#paper)" />
      <path
        d="M86.500 105.500h103v7h-41q-7 1-8 8v175q1 7 8 8h41v8h-103v-8h41q6-1 7-8v-175q-1-7-7-8h-41z"
        fill="url(#steel)"
        stroke="#000"
        strokeWidth="1.200"
      />
      <g stroke="#222" fill="none">
        <path d="M83 82.500h110M86.500 79v24M189.500 79v24" />
        <path d="M63.500 102v212M60 105.500h24M60 311.500h24" />
        <path d="M112.500 102v36M144 115l19 19.500h25M132 260.500h33" />
      </g>
      <g fill="#000">
        <circle cx="86.500" cy="82.500" r="2" />
        <circle cx="189.500" cy="82.500" r="2" />
        <circle cx="63.500" cy="105.500" r="2" />
        <circle cx="63.500" cy="311.500" r="2" />
        <circle cx="112.500" cy="105.500" r="2" />
        <circle cx="112.500" cy="112.500" r="2" />
        <circle cx="135" cy="260.500" r="2" />
        <circle cx="141" cy="260.500" r="2" />
        <text x="124" y="79">15.00</text>
        <text x="163" y="131">1.50</text>
        <text x="140" y="256">0.71</text>
        <text transform="translate(108 133) rotate(-90)">1.07</text>
        <text transform="translate(59 218) rotate(-90)">30.00</text>
        <text x="3" y="11">IPE 300 | DIN 1025-5:1994</text>
        <text x="263" y="409">[cm]</text>
      </g>
      <g stroke="#ff00ff" fill="#ff00ff">
        <path d="M138 208.500h120M138 208v122" strokeDasharray="8 2 2 2" fill="none" />
        <path d="M258 206l5 2.500-5 2.500zM135.500 329h5L138 334z" />
        <circle cx="138" cy="208.500" r="1" />
        <text x="264" y="219" stroke="none" fontWeight="700">y</text>
        <text x="139" y="344" stroke="none" fontWeight="700">z</text>
      </g>
    </svg>
  );
}

function PanelButton({ label, children, look = 'border-[#a8a8a8] bg-[#e1e1e1]' }: { label: string; children: ReactNode; look?: string }) {
  return (
    <button type="button" aria-label={label} className={`flex h-[19px] w-[23px] shrink-0 items-center justify-center border ${look}`}>
      {children}
    </button>
  );
}

const NumIcon = (
  <Svg>
    <path d="M.5 3.500h15v9H.5z" fill="#b4b8a8" stroke="#888" />
    <path d="M3.500 5.500v5M6 6h2v2H6v2.500h2.500M11 6h2.500v4.500H11M11 8h2.500" stroke="#fff" />
  </Svg>
);

const ListLens = (
  <Svg>
    <path d="M1 1.500h10M1 4.500h10M1 7.500h5M1 10.500h5" stroke="#8c8c98" strokeWidth="1.500" />
    <Lens x={6} y={5} />
  </Svg>
);

function PreviewButtons() {
  const on = 'border-[#2a70b0] bg-[#cce4f7]';
  const off = 'border-[#bfbfbf] bg-[#cccccc]';
  return (
    <div className="flex h-[52px] justify-between bg-[#f0f4fa] px-[3px] pt-[5px] text-[10px] leading-[13px] text-black">
      <div className="flex flex-col gap-[6px]">
        <div className="flex gap-[5px]">
          <PanelButton label="Zobrazit napěťové body">
            <Svg>
              <path d="M1 2.500h14M1 13.500h14M8 2v12" stroke="#333" strokeWidth="1.300" />
              <path d="M1 1h3v3H1zM12 1h3v3h-3zM1 12h3v3H1zM12 12h3v3h-3zM6.500 6.500h3v3h-3zM6.500 1h3v3h-3zM6.500 12h3v3h-3z" fill="#d83030" />
            </Svg>
          </PanelButton>
          <PanelButton label="Číslování napěťových bodů" look={off}>{NumIcon}</PanelButton>
          <PanelButton label="Detaily napěťových bodů" look="border-[#a8a8a8] bg-[#d0d0d0]">{ListLens}</PanelButton>
          <span>Napěťové body</span>
        </div>
        <div className="flex gap-[5px]">
          <PanelButton label="Zobrazit c/t části">
            <Svg>
              <path d="M2 2.500h5M9 2.500h5M2 13.500h5M9 13.500h5M8 4v8" stroke="#4c5c80" strokeWidth="1.500" />
            </Svg>
          </PanelButton>
          <PanelButton label="Číslování c/t částí" look={off}>{NumIcon}</PanelButton>
          <PanelButton label="Detaily c/t částí" look="border-[#a8a8a8] bg-[#d0d0d0]">{ListLens}</PanelButton>
          <span>c/t části průřezu</span>
        </div>
      </div>
      <div className="flex gap-[5px]">
        <PanelButton label="Kóty" look={on}>
          <Svg>
            <path d="M5.500 1l5 5M10.500 1l-5 5" stroke="#333" strokeWidth="1.300" />
            <path d="M1 11h14" stroke="#3c5c8c" strokeWidth="2" />
            <path d="M0 11l4-3v6zM16 11l-4-3v6z" fill="#3c5c8c" />
          </Svg>
        </PanelButton>
        <PanelButton label="Osy" look={on}>
          <Svg>
            <path d="M3.500 13V3.500H13" stroke="#3c5c8c" strokeWidth="1.500" />
            <path d="M1.500 11h4l-2 4zM12 1.500v4l4-2z" fill="#3c5c8c" />
          </Svg>
        </PanelButton>
        <div className="ml-1 flex flex-col gap-[6px]">
          <PanelButton label="Celý pohled">
            <Svg>
              <path d="M10 10l4 4" stroke="#333" strokeWidth="2.500" />
              <circle cx="6.500" cy="7.500" r="4.500" fill="#e0eaf4" stroke="#333" strokeWidth="1.500" />
              <path d="M7 2l7 7M15 2l-8 7" stroke="#3868b8" strokeWidth="1.800" />
            </Svg>
          </PanelButton>
          <PanelButton label="Tisk"><Printer /></PanelButton>
        </div>
      </div>
    </div>
  );
}

function Dialog() {
  return (
    <div role="dialog" aria-label="Informace o průřezu" className="absolute top-[125px] left-[418px] w-[703px] border border-t-[#e0e0e0] border-r-[#e0e0e0] border-b-[#707070] border-l-[#909090] bg-[#f0f0f0] shadow-md">
      <div className="flex h-[27px] items-center gap-[6px] bg-white pr-[7px] pl-[7px]">
        <svg viewBox="0 0 14 12" className="h-3 w-[14px]" aria-hidden="true">
          <path d="M.5.5h13v11H.5z" fill="#e8f0f0" stroke="#b0b8b8" />
          <path d="M2 2h5v8H2z" fill="#3c9078" />
          <path d="M8 2h4v4H8z" fill="#b8d0e0" />
        </svg>
        <h2 className={`flex-1 text-[10px] text-black ${UI}`}>Informace o průřezu IPE 300 | DIN 1025-5:1994</h2>
        <button type="button" aria-label="Zavřít okno">
          <svg viewBox="0 0 10 10" className="h-[10px] w-[10px]"><path d="M.5.5l9 9M9.500.5l-9 9" stroke="#222" /></svg>
        </button>
      </div>
      <div className="flex justify-between pt-[7px] pr-[5px] pl-2">
        <PropTable />
        <div className={`w-[289px] border-t border-r border-b border-l border-t-[#707070] border-r-[#c4c8f0] border-b-[#c4c8f0] border-l-[#808080] ${SANS}`}>
          <Preview />
          <PreviewButtons />
        </div>
      </div>
      <div className="mx-[7px] mt-2 border-t border-[#909090]" />
      <div className="flex items-center gap-[9px] pt-[10px] pr-[6px] pb-[8px] pl-2">
        <PanelButton label="Nápověda">
          <Svg>
            <circle cx="8" cy="7.500" r="6.500" fill="#f0f4fa" stroke="#999" />
            <path d="M3 12l-1 4 4-2.500" fill="#f0f4fa" stroke="#999" />
            <path d="M5.500 5.500c0-3 5-3 5 0 0 2-2.500 1.500-2.500 4M8 10.500v2" stroke="#4c6498" strokeWidth="1.800" />
          </Svg>
        </PanelButton>
        <PanelButton label="Export do Excelu">
          <Svg>
            <path d="M1.500.5h10v11h-10z" fill="#dff0dc" stroke="#207838" />
            <path d="M3.500 3l6 6M9.500 3l-6 6" stroke="#1c7834" strokeWidth="2" />
            <path d="M11 8l5 7H7z" fill="#e02020" stroke="#901010" strokeWidth=".6" />
          </Svg>
        </PanelButton>
        <button type="button" className={`ml-auto h-5 w-[67px] border border-[#adadad] bg-[#e1e1e1] text-[10px] text-black ${SANS}`}>
          Zavřít
        </button>
      </div>
      <svg viewBox="0 0 8 8" className="absolute right-0 bottom-0 h-2 w-2"><path d="M0 8l8-8M3 8l5-5M6 8l2-2" stroke="#888" /></svg>
      <div className="absolute top-[258px] -left-[9px] h-[31px] w-[371px] border-[5px] border-[#ed1c24]" />
    </div>
  );
}

export default function App() {
  return (
    <div className={`relative min-h-screen bg-white ${UI}`}>
      <main className="mr-[92px] flex min-h-screen flex-col overflow-hidden">
        <TitleBar />
        <Toolbars />
        <Canvas />
        <BottomPanel />
      </main>
      <Dialog />
    </div>
  );
}
